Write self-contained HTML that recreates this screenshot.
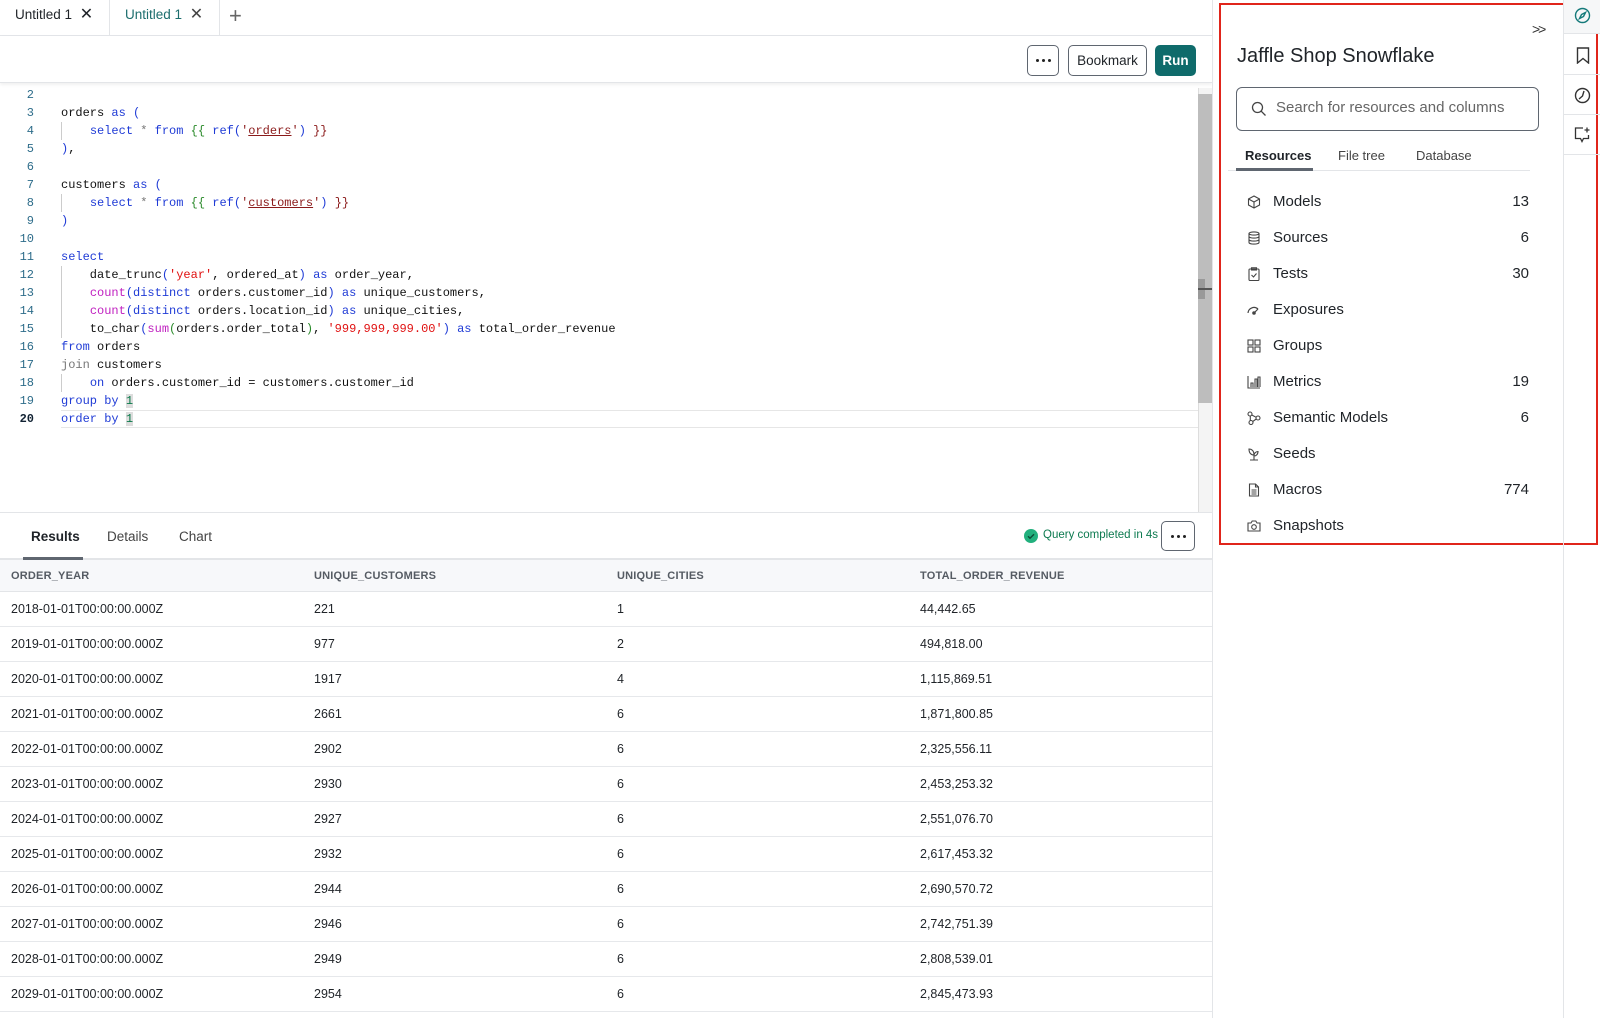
<!DOCTYPE html>
<html><head><meta charset="utf-8">
<style>
*{box-sizing:border-box;margin:0;padding:0}
body{width:1600px;height:1018px;overflow:hidden;background:#fff;font-family:"Liberation Sans",sans-serif;color:#1f2328;position:relative}
.abs{position:absolute}
.tabbar{left:0;top:0;width:1212px;height:36px;border-bottom:1px solid #e3e5e8;background:#fff}
.tab{position:absolute;top:0;height:36px;font-size:13.5px;line-height:30px;padding-left:15px;border-right:1px solid #e3e5e8}
.toolbar{left:0;top:36px;width:1212px;height:47px;border-bottom:1px solid #e3e5e8;box-shadow:0 2px 3px rgba(0,0,0,.06)}
.btn{position:absolute;top:9px;height:31px;border:1px solid #5f6670;border-radius:5px;font-size:13.5px;line-height:29px;text-align:center;background:#fff}
.dots{display:flex;align-items:center;justify-content:center;gap:3px}
.dots i{width:3px;height:3px;border-radius:50%;background:#222;display:block}
.code{left:0;top:86px;width:1198px;font-family:"Liberation Mono",monospace;font-size:12px}
.ln{position:absolute;left:0;height:18px;line-height:18px;width:34px;text-align:right;color:#2d6c8a}
.cl{position:absolute;left:61px;height:18px;line-height:18px;white-space:pre;color:#111}
.k{color:#1f3bd6}.f{color:#c020c0}.s{color:#e01010}.g{color:#2a8a2a}.r{color:#8b1a1a}.u{color:#8b1a1a;text-decoration:underline}.n{color:#0a7a4a}.gr{color:#777}
.hdr{font-size:11px;font-weight:bold;color:#555b63;letter-spacing:.2px}
.row{position:absolute;left:0;width:1212px;height:35px;border-bottom:1px solid #e6e8eb;font-size:12.5px;line-height:34px}
.row span{position:absolute}
.side{left:1212px;top:0;width:351px;height:1018px;border-left:1px solid #e3e5e8}
.item{position:absolute;left:1247px;width:282px;height:20px;font-size:15px;line-height:20px}
.item svg{position:absolute;left:0;top:3px}
.item .l{position:absolute;left:26px}
.item .c{position:absolute;right:0}
.rail{left:1563px;top:0;width:37px;height:1018px;border-left:1px solid #e3e5e8}
</style></head><body>

<div class="abs tabbar">
  <div class="tab" style="left:0;width:110px">Untitled 1 <span style="font-size:16px;margin-left:4px">✕</span></div>
  <div class="tab" style="left:110px;width:110px;color:#1d6e6e">Untitled 1 <span style="font-size:16px;margin-left:4px;color:#444">✕</span></div>
  <div class="abs" style="left:229px;top:3px;font-size:22px;color:#666;font-weight:300">+</div>
</div>

<div class="abs toolbar">
  <div class="btn dots" style="left:1027px;width:32px"><i></i><i></i><i></i></div>
  <div class="btn" style="left:1068px;width:79px">Bookmark</div>
  <div class="btn" style="left:1155px;width:41px;background:#0f6b6b;border-color:#0f6b6b;color:#fff;font-weight:bold">Run</div>
</div>

<div class="abs code">
<div class="ln" style="top:0">2</div>
<div class="ln" style="top:18px">3</div><div class="cl" style="top:18px">orders <span class="k">as</span> <span class="k">(</span></div>
<div class="ln" style="top:36px">4</div><div class="cl" style="top:36px">    <span class="k">select</span> <span class="gr">*</span> <span class="k">from</span> <span class="g">{{</span> <span class="k">ref(</span><span class="r">'</span><span class="u">orders</span><span class="r">'</span><span class="k">)</span> <span class="r">}}</span></div>
<div class="ln" style="top:54px">5</div><div class="cl" style="top:54px"><span class="k">)</span>,</div>
<div class="ln" style="top:72px">6</div>
<div class="ln" style="top:90px">7</div><div class="cl" style="top:90px">customers <span class="k">as</span> <span class="k">(</span></div>
<div class="ln" style="top:108px">8</div><div class="cl" style="top:108px">    <span class="k">select</span> <span class="gr">*</span> <span class="k">from</span> <span class="g">{{</span> <span class="k">ref(</span><span class="r">'</span><span class="u">customers</span><span class="r">'</span><span class="k">)</span> <span class="r">}}</span></div>
<div class="ln" style="top:126px">9</div><div class="cl" style="top:126px"><span class="k">)</span></div>
<div class="ln" style="top:144px">10</div>
<div class="ln" style="top:162px">11</div><div class="cl" style="top:162px"><span class="k">select</span></div>
<div class="ln" style="top:180px">12</div><div class="cl" style="top:180px">    date_trunc<span class="k">(</span><span class="s">'year'</span>, ordered_at<span class="k">)</span> <span class="k">as</span> order_year,</div>
<div class="ln" style="top:198px">13</div><div class="cl" style="top:198px">    <span class="f">count</span><span class="k">(distinct</span> orders.customer_id<span class="k">)</span> <span class="k">as</span> unique_customers,</div>
<div class="ln" style="top:216px">14</div><div class="cl" style="top:216px">    <span class="f">count</span><span class="k">(distinct</span> orders.location_id<span class="k">)</span> <span class="k">as</span> unique_cities,</div>
<div class="ln" style="top:234px">15</div><div class="cl" style="top:234px">    to_char<span class="k">(</span><span class="f">sum</span><span class="g">(</span>orders.order_total<span class="g">)</span>, <span class="s">'999,999,999.00'</span><span class="k">)</span> <span class="k">as</span> total_order_revenue</div>
<div class="ln" style="top:252px">16</div><div class="cl" style="top:252px"><span class="k">from</span> orders</div>
<div class="ln" style="top:270px">17</div><div class="cl" style="top:270px"><span class="gr">join</span> customers</div>
<div class="ln" style="top:288px">18</div><div class="cl" style="top:288px">    <span class="k">on</span> orders.customer_id = customers.customer_id</div>
<div class="ln" style="top:306px">19</div><div class="cl" style="top:306px"><span class="k">group by</span> <span class="n" style="background:#ddd">1</span></div>
<div class="abs" style="left:61px;top:324px;width:1137px;height:18px;border-top:1px solid #e6e6e6;border-bottom:1px solid #e6e6e6"></div>
<div class="ln" style="top:324px;color:#123;font-weight:bold">20</div><div class="cl" style="top:324px"><span class="k">order by</span> <span class="n" style="background:#ddd">1</span></div>
<div class="abs" style="left:61px;top:36px;width:1px;height:18px;background:#ccc"></div>
<div class="abs" style="left:61px;top:108px;width:1px;height:18px;background:#ccc"></div>
<div class="abs" style="left:61px;top:180px;width:1px;height:72px;background:#ccc"></div>
<div class="abs" style="left:61px;top:288px;width:1px;height:18px;background:#ccc"></div>
</div>

<div class="abs" style="left:1198px;top:88px;width:14px;height:424px;background:#f4f4f4;border-left:1px solid #ddd"></div>
<div class="abs" style="left:1198px;top:94px;width:14px;height:309px;background:#bdbdbd"></div>
<div class="abs" style="left:1198px;top:279px;width:7px;height:20px;background:#999"></div>
<div class="abs" style="left:1198px;top:288px;width:14px;height:2px;background:#555"></div>

<div class="abs" style="left:0;top:512px;width:1212px;height:48px;border-top:1px solid #e3e5e8;border-bottom:2px solid #e3e5e8"></div>
<div class="abs" style="left:31px;top:529px;font-size:13.5px;font-weight:bold">Results</div>
<div class="abs" style="left:23px;top:557px;width:60px;height:3px;background:#5f6670"></div>
<div class="abs" style="left:107px;top:529px;font-size:13.5px;color:#444">Details</div>
<div class="abs" style="left:179px;top:529px;font-size:13.5px;color:#444">Chart</div>
<svg class="abs" style="left:1024px;top:529px" width="14" height="14" viewBox="0 0 14 14"><circle cx="7" cy="7" r="7" fill="#22b07d"/><path d="M4 7.2l2 2 4-4" stroke="#0b4d36" stroke-width="1.4" fill="none"/></svg>
<div class="abs" style="left:1043px;top:529px;font-size:11.5px;color:#0d7a50">Query completed in 4s</div>
<div class="btn dots" style="left:1161px;top:521px;width:34px;height:30px"><i></i><i></i><i></i></div>

<div class="abs hdr" style="left:0;top:560px;width:1212px;height:32px;background:#f7f8fa;border-bottom:1px solid #e3e5e8;line-height:32px">
  <span class="abs" style="left:11px">ORDER_YEAR</span><span class="abs" style="left:314px">UNIQUE_CUSTOMERS</span><span class="abs" style="left:617px">UNIQUE_CITIES</span><span class="abs" style="left:920px">TOTAL_ORDER_REVENUE</span>
</div>
<div class="row" style="top:592px"><span style="left:11px">2018-01-01T00:00:00.000Z</span><span style="left:314px">221</span><span style="left:617px">1</span><span style="left:920px">44,442.65</span></div>
<div class="row" style="top:627px"><span style="left:11px">2019-01-01T00:00:00.000Z</span><span style="left:314px">977</span><span style="left:617px">2</span><span style="left:920px">494,818.00</span></div>
<div class="row" style="top:662px"><span style="left:11px">2020-01-01T00:00:00.000Z</span><span style="left:314px">1917</span><span style="left:617px">4</span><span style="left:920px">1,115,869.51</span></div>
<div class="row" style="top:697px"><span style="left:11px">2021-01-01T00:00:00.000Z</span><span style="left:314px">2661</span><span style="left:617px">6</span><span style="left:920px">1,871,800.85</span></div>
<div class="row" style="top:732px"><span style="left:11px">2022-01-01T00:00:00.000Z</span><span style="left:314px">2902</span><span style="left:617px">6</span><span style="left:920px">2,325,556.11</span></div>
<div class="row" style="top:767px"><span style="left:11px">2023-01-01T00:00:00.000Z</span><span style="left:314px">2930</span><span style="left:617px">6</span><span style="left:920px">2,453,253.32</span></div>
<div class="row" style="top:802px"><span style="left:11px">2024-01-01T00:00:00.000Z</span><span style="left:314px">2927</span><span style="left:617px">6</span><span style="left:920px">2,551,076.70</span></div>
<div class="row" style="top:837px"><span style="left:11px">2025-01-01T00:00:00.000Z</span><span style="left:314px">2932</span><span style="left:617px">6</span><span style="left:920px">2,617,453.32</span></div>
<div class="row" style="top:872px"><span style="left:11px">2026-01-01T00:00:00.000Z</span><span style="left:314px">2944</span><span style="left:617px">6</span><span style="left:920px">2,690,570.72</span></div>
<div class="row" style="top:907px"><span style="left:11px">2027-01-01T00:00:00.000Z</span><span style="left:314px">2946</span><span style="left:617px">6</span><span style="left:920px">2,742,751.39</span></div>
<div class="row" style="top:942px"><span style="left:11px">2028-01-01T00:00:00.000Z</span><span style="left:314px">2949</span><span style="left:617px">6</span><span style="left:920px">2,808,539.01</span></div>
<div class="row" style="top:977px"><span style="left:11px">2029-01-01T00:00:00.000Z</span><span style="left:314px">2954</span><span style="left:617px">6</span><span style="left:920px">2,845,473.93</span></div>

<div class="abs side"></div>
<div class="abs" style="left:1219px;top:3px;width:379px;height:542px;border:2px solid #e0251b"></div>
<div class="abs" style="left:1532px;top:21px;font-size:14px;color:#333;letter-spacing:-2px">&gt;&gt;</div>
<div class="abs" style="left:1237px;top:45px;font-size:20px;color:#1f2328">Jaffle Shop Snowflake</div>
<div class="abs" style="left:1236px;top:87px;width:303px;height:44px;border:1px solid #5f6670;border-radius:6px"></div>
<svg class="abs" style="left:1251px;top:101px" width="16" height="16" viewBox="0 0 16 16" fill="none" stroke="#444" stroke-width="1.3"><circle cx="6.5" cy="6.5" r="5"/><path d="M10.2 10.2L14.5 14.5"/></svg>
<div class="abs" style="left:1276px;top:99px;font-size:15px;color:#666">Search for resources and columns</div>
<div class="abs" style="left:1245px;top:148px;font-size:13px;font-weight:bold">Resources</div>
<div class="abs" style="left:1338px;top:148px;font-size:13px;color:#444">File tree</div>
<div class="abs" style="left:1416px;top:148px;font-size:13px;color:#444">Database</div>
<div class="abs" style="left:1228px;top:170px;width:302px;height:1px;background:#e3e5e8"></div>
<div class="abs" style="left:1236px;top:168px;width:77px;height:3px;background:#5f6670"></div>

<div class="item" style="top:192px"><svg width="14" height="14" viewBox="0 0 14 14" fill="none" stroke="#444" stroke-width="1.1"><path d="M7 1l5.5 3v6L7 13 1.5 10V4z M1.5 4L7 7l5.5-3 M7 7v6"/></svg><span class="l">Models</span><span class="c">13</span></div>
<div class="item" style="top:228px"><svg width="14" height="14" viewBox="0 0 14 14" fill="none" stroke="#444" stroke-width="1.1"><ellipse cx="7" cy="2.5" rx="5" ry="1.6"/><path d="M2 2.5v9c0 .9 2.2 1.6 5 1.6s5-.7 5-1.6v-9 M2 5.5c0 .9 2.2 1.6 5 1.6s5-.7 5-1.6 M2 8.5c0 .9 2.2 1.6 5 1.6s5-.7 5-1.6"/></svg><span class="l">Sources</span><span class="c">6</span></div>
<div class="item" style="top:264px"><svg width="14" height="14" viewBox="0 0 14 14" fill="none" stroke="#444" stroke-width="1.1"><rect x="2" y="2" width="10" height="11.5" rx="1"/><rect x="4.5" y="0.8" width="5" height="2.2"/><path d="M4.5 8l2 2 3-3.5"/></svg><span class="l">Tests</span><span class="c">30</span></div>
<div class="item" style="top:300px"><svg width="14" height="14" viewBox="0 0 14 14" fill="none" stroke="#444" stroke-width="1.2"><path d="M1 10a6 6 0 0 1 10-4"/><circle cx="7" cy="10" r="1.2" fill="#444"/><path d="M7 10l4-4"/></svg><span class="l">Exposures</span></div>
<div class="item" style="top:336px"><svg width="14" height="14" viewBox="0 0 14 14" fill="none" stroke="#444" stroke-width="1.1"><rect x="1" y="1" width="5" height="5"/><rect x="8" y="1" width="5" height="5"/><rect x="1" y="8" width="5" height="5"/><rect x="8" y="8" width="5" height="5"/></svg><span class="l">Groups</span></div>
<div class="item" style="top:372px"><svg width="14" height="14" viewBox="0 0 14 14" fill="none" stroke="#444" stroke-width="1.1"><path d="M1 1v12h12 M4 12V8h2v4 M8 12V4h2v8 M11 12V2h2v10"/></svg><span class="l">Metrics</span><span class="c">19</span></div>
<div class="item" style="top:408px"><svg width="14" height="14" viewBox="0 0 14 14" fill="none" stroke="#444" stroke-width="1.1"><circle cx="3" cy="3" r="2"/><circle cx="11" cy="7" r="2"/><circle cx="4" cy="11.5" r="2"/><path d="M4.8 4l4.4 2.3 M9.2 8l-3.5 2.6 M3.3 5v4.5"/></svg><span class="l">Semantic Models</span><span class="c">6</span></div>
<div class="item" style="top:444px"><svg width="14" height="14" viewBox="0 0 14 14" fill="none" stroke="#444" stroke-width="1.1"><path d="M7 13V6 M7 8C4 8 2 6 2 2c3 0 5 2 5 6 M7 9c2 0 4-1.5 4-4.5-2 0-4 1.5-4 4.5 M3 13h8"/></svg><span class="l">Seeds</span></div>
<div class="item" style="top:480px"><svg width="14" height="14" viewBox="0 0 14 14" fill="none" stroke="#444" stroke-width="1.1"><path d="M2.5 1h6l3 3v9h-9z M8.5 1v3h3 M4.5 7h5 M4.5 9h5 M4.5 11h5"/></svg><span class="l">Macros</span><span class="c">774</span></div>
<div class="item" style="top:516px"><svg width="14" height="14" viewBox="0 0 14 14" fill="none" stroke="#444" stroke-width="1.1"><path d="M1 4h3l1.2-2h3.6L10 4h3v8H1z"/><circle cx="7" cy="8" r="2.3"/></svg><span class="l">Snapshots</span></div>

<div class="abs rail"></div>
<div class="abs" style="left:1564px;top:0;width:36px;height:33px;background:#f6f7f8"></div>
<svg class="abs" style="left:1574px;top:7px" width="17" height="17" viewBox="0 0 17 17" fill="none" stroke="#157a7a" stroke-width="1.4"><circle cx="8.5" cy="8.5" r="7"/><path d="M11.5 5.5l-2 4-4 2 2-4z"/></svg>
<div class="abs" style="left:1564px;top:33px;width:36px;height:1px;background:#e3e5e8"></div>
<svg class="abs" style="left:1576px;top:47px" width="14" height="17" viewBox="0 0 14 17" fill="none" stroke="#333" stroke-width="1.4"><path d="M1.5 1h11v15L7 11.5 1.5 16z"/></svg>
<div class="abs" style="left:1564px;top:74px;width:36px;height:1px;background:#e3e5e8"></div>
<svg class="abs" style="left:1574px;top:87px" width="17" height="17" viewBox="0 0 17 17" fill="none" stroke="#333" stroke-width="1.4"><circle cx="8.5" cy="8.5" r="7"/><path d="M10 4l-1.5 5L5 12"/></svg>
<div class="abs" style="left:1564px;top:114px;width:36px;height:1px;background:#e3e5e8"></div>
<svg class="abs" style="left:1574px;top:126px" width="18" height="18" viewBox="0 0 18 18" fill="none" stroke="#333" stroke-width="1.3"><path d="M9 2H1.5v10.5h5l1.5 3 1.5-3h5V9 M13 1.5v5 M10.5 4h5"/></svg>
<div class="abs" style="left:1564px;top:154px;width:36px;height:1px;background:#e3e5e8"></div>
</body></html>
